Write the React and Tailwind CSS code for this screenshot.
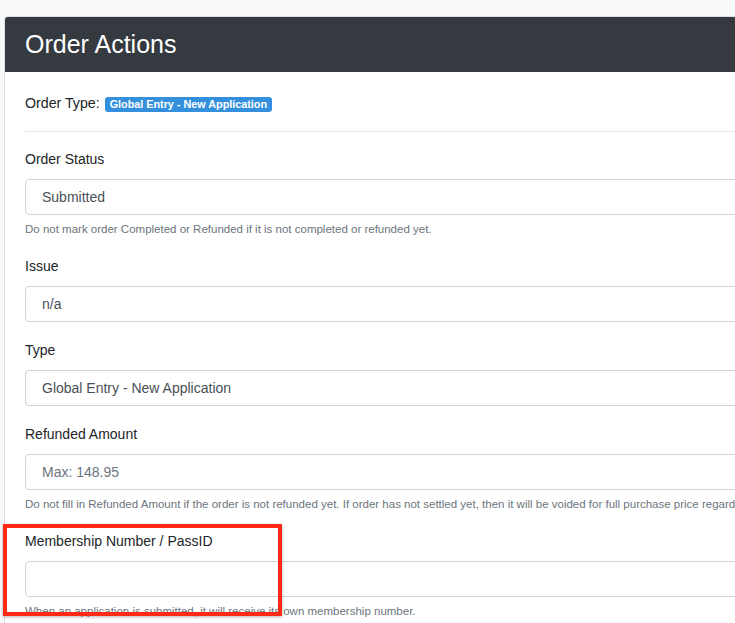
import React from "react";

const font = { fontFamily: '"Liberation Sans", Arial, sans-serif' };

const Field = ({ label, value, placeholder, help }) => (
  <div className="mb-[18px]">
    <label className="block text-[14px] leading-[20px] text-[#212529] mb-[10px]">{label}</label>
    <div className="h-[36px] border border-[#ced4da] rounded-[4px] bg-white flex items-center pl-4 text-[14px]">
      {value ? (
        <span className="text-[#495057]">{value}</span>
      ) : (
        <span className="text-[#6c757d]">{placeholder}</span>
      )}
    </div>
    {help && (
      <p className="mt-[5px] text-[11.5px] leading-[18px] text-[#6c757d] whitespace-nowrap">{help}</p>
    )}
  </div>
);

const App = () => {
  return (
    <div className="w-[735px] h-[623px] overflow-hidden bg-[#f8f9fa] relative" style={font}>
      <div className="pt-4 pl-1">
        <div className="w-[1000px] bg-white border border-[rgba(0,0,0,0.125)] rounded-tl-[4px]">
          <div className="h-[55px] bg-[#343a40] flex items-center px-5 rounded-tl-[3px]">
            <h1 className="text-white text-[25px] leading-none">Order Actions</h1>
          </div>
          <div className="px-5 pt-5">
            <div className="h-6 flex items-center text-[14.2px] text-[#212529]">
              Order Type:
              <span className="ml-[5px] h-[15px] px-[5px] rounded-[3px] bg-[#3490dc] text-white font-bold text-[10.8px] flex items-center">
                Global Entry - New Application
              </span>
            </div>
            <hr className="mt-[15px] mb-[17px] border-t border-[#e5e5e5]" />
            <Field
              label="Order Status"
              value="Submitted"
              help="Do not mark order Completed or Refunded if it is not completed or refunded yet."
            />
            <Field label="Issue" value="n/a" />
            <Field label="Type" value="Global Entry - New Application" />
            <Field
              label="Refunded Amount"
              placeholder="Max: 148.95"
              help="Do not fill in Refunded Amount if the order is not refunded yet. If order has not settled yet, then it will be voided for full purchase price regardless of the amount entered."
            />
            <Field
              label="Membership Number / PassID"
              placeholder=""
              help="When an application is submitted, it will receive its own membership number."
            />
          </div>
        </div>
      </div>
      <div className="absolute left-[3px] top-[524px] w-[279px] h-[92px] border-[4px] border-[#ff2a16] shadow-[0_1px_3px_rgba(0,0,0,0.3)]" />
    </div>
  );
};

export default App;
